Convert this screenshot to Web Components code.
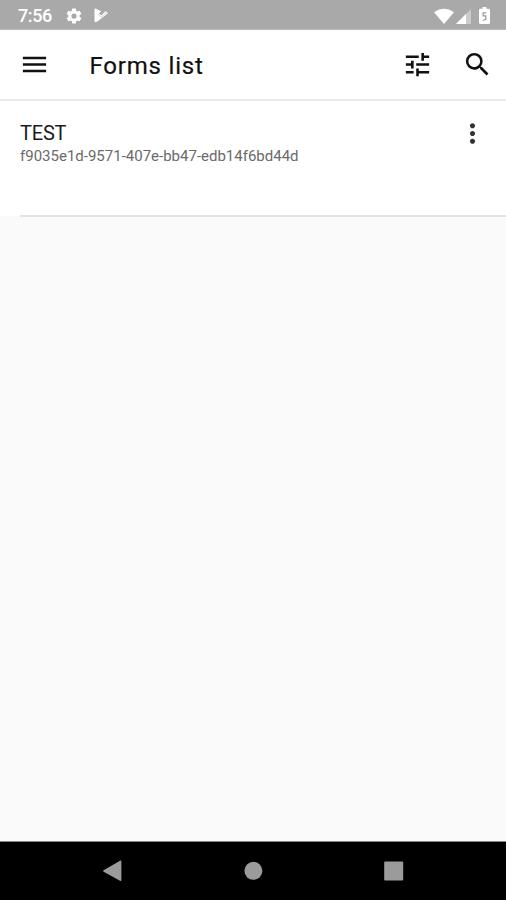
<!DOCTYPE html>
<html lang="en">
<head>
<meta charset="utf-8">
<title>Forms list</title>
<style>
    :root {
        --status-gray: #a9a9a9;
        --surface: #ffffff;
        --background: #fafafa;
        --divider: #e3e3e3;
        --text-primary: #1c1c1c;
        --text-secondary: #6a6a6a;
    }

    body {
        margin: 0;
        font-family: Roboto, "Liberation Sans", sans-serif;
    }
</style>
</head>
<body>
<forms-screen></forms-screen>

<script>
class StatusBar extends HTMLElement {
    constructor() {
        super();
        this.attachShadow({ mode: 'open' });
        this.shadowRoot.innerHTML = `
            <style>
            :host {
                display: flex;
                justify-content: space-between;
                align-items: center;
                box-sizing: border-box;
                height: 30px;
                padding: 2px 16px 0 18px;
                background: var(--status-gray);
                color: #fff;
                border-bottom: 1px solid #bababa;
            }

            .group {
                display: flex;
                align-items: center;
            }

            .time {
                width: 47px;
                font-size: 18px;
                font-weight: 500;
                line-height: 20px;
                letter-spacing: -0.4px;
            }

            svg {
                display: block;
                fill: currentColor;
            }

            .play { margin-left: 11px; }
            .signal { margin: 1px 8px 0 2px; }
            </style>
            <div class="group">
                <span class="time">7:56</span>
                <svg width="18" height="18" viewBox="0 0 24 24"><path fill-rule="evenodd" d="M19.43 12.98c.04-.32.07-.64.07-.98s-.03-.66-.07-.98l2.11-1.65c.19-.15.24-.42.12-.64l-2-3.46c-.12-.22-.39-.3-.61-.22l-2.49 1c-.52-.4-1.08-.73-1.69-.98l-.38-2.65C14.46 2.18 14.25 2 14 2h-4c-.25 0-.46.18-.49.42l-.38 2.65c-.61.25-1.17.59-1.69.98l-2.49-1c-.23-.09-.49 0-.61.22l-2 3.46c-.13.22-.07.49.12.64l2.11 1.65c-.04.32-.07.65-.07.98s.03.66.07.98l-2.11 1.65c-.19.15-.24.42-.12.64l2 3.46c.12.22.39.3.61.22l2.49-1c.52.4 1.08.73 1.69.98l.38 2.65c.03.24.24.42.49.42h4c.25 0 .46-.18.49-.42l.38-2.65c.61-.25 1.17-.59 1.69-.98l2.49 1c.23.09.49 0 .61-.22l2-3.46c.12-.22.07-.49-.12-.64l-2.11-1.65zM12 15.5a3.5 3.5 0 1 1 0-7 3.5 3.5 0 0 1 0 7z"/></svg>
                <svg class="play" width="15" height="15" viewBox="0 0 15 15"><path d="M.5 1.6Q.5 0 2 .7L7.2 3.3 5 5.2 7.2 7.4 11.8 3 14 5.2 3 13.8Q.5 15 .5 13z"/><path d="M4 6 7.2 9.2 13 4.2" fill="none" stroke="#a9a9a9" stroke-width=".5"/></svg>
            </div>
            <div class="group">
                <svg width="20" height="16" viewBox="0 0 20 16"><path d="M0 4.2Q10-2.6 20 4.2L10 16z"/></svg>
                <svg class="signal" width="15" height="15" viewBox="0 0 15 15"><path opacity=".4" d="M15 0v15H0z"/><path d="M10 5v10H0z"/></svg>
                <svg width="11" height="17" viewBox="0 0 11 17"><path d="M3.6 0h3.8v1.8h2.3q1.3 0 1.3 1.3v12.4Q11 17 9.5 17h-8Q0 17 0 15.5V3.1q0-1.3 1.3-1.3h2.3z"/><path d="M7.3 5.8H4.2v3.1h2.6v3.5L3.7 13.5" fill="none" stroke="#9c9c9c" stroke-width="1.3"/></svg>
            </div>
        `;
    }
}

class MdIcon extends HTMLElement {
    static paths = {
        menu: 'M3 18h18v-2H3v2zm0-5h18v-2H3v2zm0-7v2h18V6H3z',
        tune: 'M3 17v2h6v-2H3zM3 5v2h10V5H3zm10 16v-2h8v-2h-8v-2h-2v6h2zM7 9v2H3v2h4v2h2V9H7zm14 4v-2H11v2h10zm-6-4h2V7h4V5h-4V3h-2v6z',
        search: 'M15.5 14h-.79l-.28-.27A6.47 6.47 0 0 0 16 9.5 6.5 6.5 0 1 0 9.5 16c1.61 0 3.09-.59 4.23-1.57l.27.28v.79l5 4.99L20.49 19l-4.99-5zm-6 0C7.01 14 5 11.99 5 9.5S7.01 5 9.5 5 14 7.01 14 9.5 11.99 14 9.5 14z',
        more: 'M12 8c1.1 0 2-.9 2-2s-.9-2-2-2-2 .9-2 2 .9 2 2 2zm0 2c-1.1 0-2 .9-2 2s.9 2 2 2 2-.9 2-2-.9-2-2-2zm0 6c-1.1 0-2 .9-2 2s.9 2 2 2 2-.9 2-2-.9-2-2-2z'
    };

    constructor() {
        super();
        this.attachShadow({ mode: 'open' });
    }

    connectedCallback() {
        this.shadowRoot.innerHTML = `
            <style>
            :host {
                display: block;
                flex: none;
                width: 31px;
                height: 31px;
            }

            svg {
                display: block;
                width: 100%;
                height: 100%;
                fill: currentColor;
            }
            </style>
            <svg viewBox="0 0 24 24"><path d="${MdIcon.paths[this.getAttribute('name')]}"/></svg>
        `;
    }
}

class AppBar extends HTMLElement {
    constructor() {
        super();
        this.attachShadow({ mode: 'open' });
        this.shadowRoot.innerHTML = `
            <style>
            :host {
                display: flex;
                align-items: center;
                box-sizing: border-box;
                height: 71px;
                padding: 0 13.5px 0 19px;
                background: var(--surface);
                border-bottom: 2px solid #e9e9e9;
                color: #111;
            }

            h1 {
                flex: 1;
                margin: 2px 0 0 39.5px;
                font-size: 24px;
                font-weight: 400;
                line-height: 32px;
                letter-spacing: 0.8px;
                -webkit-text-stroke: 0.2px currentColor;
            }

            .actions {
                display: flex;
                gap: 28.5px;
            }
            </style>
            <md-icon name="menu"></md-icon>
            <h1><slot></slot></h1>
            <div class="actions">
                <md-icon name="tune"></md-icon>
                <md-icon name="search"></md-icon>
            </div>
        `;
    }
}

class FormItem extends HTMLElement {
    constructor() {
        super();
        this.attachShadow({ mode: 'open' });
        this.shadowRoot.innerHTML = `
            <style>
            :host {
                display: block;
                padding-left: 20px;
                background: linear-gradient(var(--surface), var(--surface)) no-repeat 0 0 / 100% 115px;
            }

            .row {
                display: flex;
                justify-content: space-between;
                align-items: flex-start;
                box-sizing: border-box;
                height: 116px;
                padding: 20px 18.5px 0 0;
                border-bottom: 2px solid var(--divider);
            }

            .name {
                color: var(--text-primary);
                font-size: 20px;
                line-height: 25px;
                letter-spacing: -0.2px;
            }

            .id {
                color: var(--text-secondary);
                font-size: 15px;
                line-height: 20px;
            }

            md-icon {
                margin-top: -3px;
                color: #333;
            }
            </style>
            <div class="row">
                <div>
                    <div class="name"><slot name="name"></slot></div>
                    <div class="id"><slot name="id"></slot></div>
                </div>
                <md-icon name="more"></md-icon>
            </div>
        `;
    }
}

class NavBar extends HTMLElement {
    constructor() {
        super();
        this.attachShadow({ mode: 'open' });
        this.shadowRoot.innerHTML = `
            <style>
            :host {
                display: flex;
                justify-content: space-between;
                align-items: center;
                box-sizing: border-box;
                height: 59px;
                padding: 0 102px;
                background: #000;
                border-top: 1px solid #858585;
            }

            svg {
                display: block;
                width: 20px;
                height: 22px;
                fill: #9b9b9b;
            }
            </style>
            <svg viewBox="0 0 20 22"><path d="M1.6 10.3 18 .8q1.4-.7 1.4.7v18.6q0 1.4-1.4.7L1.6 11.7q-1.1-.7 0-1.4z"/></svg>
            <svg viewBox="0 0 20 22"><circle cx="10.4" cy="10.8" r="9"/></svg>
            <svg viewBox="0 0 20 22"><rect x=".2" y="1.4" width="19" height="19.2" rx="1"/></svg>
        `;
    }
}

class FormsScreen extends HTMLElement {
    constructor() {
        super();
        this.attachShadow({ mode: 'open' });
        this.shadowRoot.innerHTML = `
            <style>
            :host {
                display: flex;
                flex-direction: column;
                height: 900px;
                background: var(--background);
            }

            main {
                flex: 1;
            }
            </style>
            <status-bar></status-bar>
            <app-bar>Forms list</app-bar>
            <main>
                <form-item>
                    <span slot="name">TEST</span>
                    <span slot="id">f9035e1d-9571-407e-bb47-edb14f6bd44d</span>
                </form-item>
            </main>
            <nav-bar></nav-bar>
        `;
    }
}

customElements.define('md-icon', MdIcon);
customElements.define('status-bar', StatusBar);
customElements.define('app-bar', AppBar);
customElements.define('form-item', FormItem);
customElements.define('nav-bar', NavBar);
customElements.define('forms-screen', FormsScreen);
</script>
</body>
</html>
